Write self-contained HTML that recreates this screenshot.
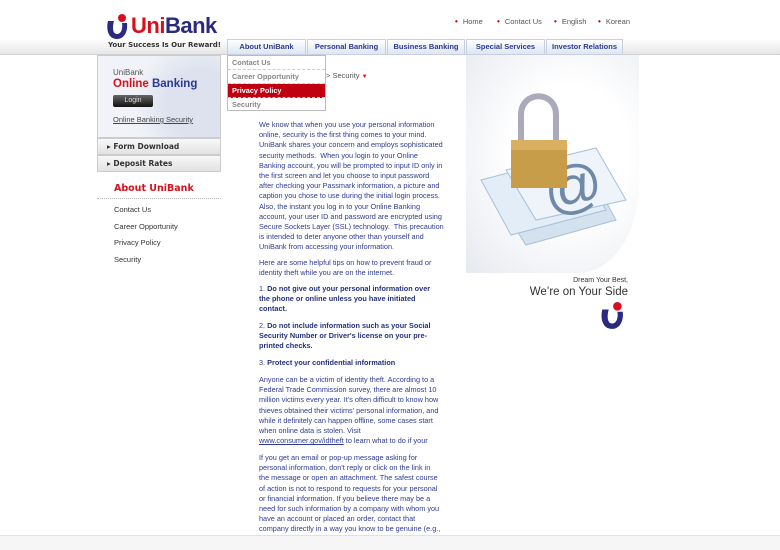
<!DOCTYPE html>
<html><head><meta charset="utf-8"><style>
*{margin:0;padding:0;box-sizing:border-box}
body{width:780px;height:550px;background:#fff;font-family:"Liberation Sans",Verdana,sans-serif;position:relative;overflow:hidden}
.a{position:absolute;white-space:nowrap}
.band{position:absolute;left:0;top:39px;width:780px;height:16px;background:linear-gradient(#fff,#e6e6e6);border-bottom:1px solid #d0d0d0}
.tab{position:absolute;top:39px;height:16px;border:1px solid #c8cfe0;background:linear-gradient(#fff,#dde6f4);font:bold 7.5px "Liberation Sans",sans-serif;color:#2a3990;text-align:center;line-height:14px}
.top{font-size:7.5px;color:#555;top:17px}
.top b{color:#c00;font-size:8px;margin-right:5px}
.menu{position:absolute;left:227px;top:55px;width:99px;height:56px;border:1px solid #bbb;background:#fff}
.menu div{height:14px;font:bold 7.3px "Liberation Sans",sans-serif;color:#888;line-height:13px;padding-left:4px;border-bottom:1px dashed #ccc}
.body{position:absolute;left:259px;font-size:7.3px;color:#2e3b92;line-height:10.2px;white-space:nowrap}
.body b{color:#26317a}
.lb{position:absolute;left:97px;width:124px;height:17px;background:linear-gradient(#f8f8f8,#e2e2e2);border:1px solid #ccc;font:bold 7.5px "DejaVu Sans",sans-serif;color:#333;line-height:15px;padding-left:9px}
.sub{position:absolute;left:114px;font-size:7.5px;color:#333}
</style></head><body>
<div class="band"></div>
<svg class="a" style="left:104px;top:13px" width="26" height="28" viewBox="0 0 26 28"><path d="M4 8 C2 16 4 26 13 26 C20 26 24 19 23 10 L18 10 C19 16 17 21 13 21 C9 21 8 15 10 8 Z" fill="#2a2a80"/><circle cx="18" cy="5" r="4" fill="#d8101c"/></svg>
<div class="a" style="left:131px;top:13px;font:bold 22px 'Liberation Sans',sans-serif;color:#d8101c;letter-spacing:-0.5px">Uni<span style="color:#2a2a80">Bank</span></div>
<div class="a" style="left:108px;top:41px;font:bold 7px 'DejaVu Sans',sans-serif;color:#333">Your Success Is Our Reward!</div>
<div class="a top" style="left:455px"><b>•</b>Home</div>
<div class="a top" style="left:497px"><b>•</b>Contact Us</div>
<div class="a top" style="left:554px"><b>•</b>English</div>
<div class="a top" style="left:598px"><b>•</b>Korean</div>
<div class="tab" style="left:227px;width:79px">About UniBank</div>
<div class="tab" style="left:307px;width:79px">Personal Banking</div>
<div class="tab" style="left:387px;width:78px">Business Banking</div>
<div class="tab" style="left:466px;width:79px">Special Services</div>
<div class="tab" style="left:546px;width:77px">Investor Relations</div>
<div class="a" style="left:466px;top:55px;width:173px;height:218px;background:radial-gradient(ellipse at 60% 45%,#fff 40%,#e6e9ef 100%);border-bottom-right-radius:60px 90px"></div>
<svg class="a" style="left:476px;top:70px" width="160" height="180" viewBox="0 0 160 180">
<path d="M45 75 L45 45 C45 20 80 20 80 45 L80 75" fill="none" stroke="#aab" stroke-width="6"/>
<polygon points="15,120 110,95 140,150 50,175" fill="#d4e2f0" stroke="#a9bfd8"/>
<polygon points="5,110 100,85 130,140 35,165" fill="#e3edf7" stroke="#a9bfd8"/>
<polygon points="30,100 120,78 150,130 60,150" fill="#eef4fa" stroke="#a9bfd8"/>
<text x="68" y="138" font-family="Liberation Sans,sans-serif" font-size="58" fill="#7089a8" transform="rotate(-12 90 120)">@</text>
<rect x="35" y="70" width="56" height="48" fill="#c79d4a"/>
<rect x="35" y="70" width="56" height="10" fill="#d8b060"/>
</svg>
<div class="a" style="left:528px;width:100px;text-align:right;top:277px;font-size:7px;color:#333">Dream Your Best,</div>
<div class="a" style="left:500px;width:128px;text-align:right;top:286px;font-size:11.5px;color:#333">We’re on Your Side</div>
<svg class="a" style="left:598px;top:300px" width="28" height="32" viewBox="0 0 26 28"><path d="M4 8 C2 16 4 26 13 26 C20 26 24 19 23 10 L18 10 C19 16 17 21 13 21 C9 21 8 15 10 8 Z" fill="#2a2a80"/><circle cx="18" cy="5" r="4" fill="#d8101c"/></svg>
<div class="a" style="left:97px;top:55px;width:124px;height:83px;background:radial-gradient(circle at 85% 60%,#dde2ee 30%,#f1f3f8 60%);border:1px solid #ccc"></div>
<div class="a" style="left:113px;top:68px;font-size:8px;color:#555">UniBank</div>
<div class="a" style="left:113px;top:78px;font:bold 11.5px 'Liberation Sans',sans-serif;color:#d8101c">Online <span style="color:#2a3990">Banking</span></div>
<div class="a" style="left:113px;top:95px;width:40px;height:12px;background:linear-gradient(#666,#111);border-radius:2px;font-size:7px;color:#ddd;text-align:center;line-height:12px">Login</div>
<div class="a" style="left:113px;top:115px;font-size:7.5px;color:#444;text-decoration:underline">Online Banking Security</div>
<div class="lb" style="top:138px">▸ Form Download</div>
<div class="lb" style="top:155px">▸ Deposit Rates</div>
<div class="a" style="left:114px;top:183px;font:bold 9.5px 'DejaVu Sans',sans-serif;color:#d8101c">About UniBank</div>
<div class="a" style="left:97px;top:198px;width:124px;border-top:1px dotted #bbb"></div>
<div class="sub a" style="top:205px">Contact Us</div>
<div class="sub a" style="top:222px">Career Opportunity</div>
<div class="sub a" style="top:238px">Privacy Policy</div>
<div class="sub a" style="top:255px">Security</div>
<div class="a" style="left:326px;top:71px;font-size:7.5px;color:#555">&gt; Security <span style="color:#d8101c;font-size:6px">▼</span></div>
<div class="menu"><div>Contact Us</div><div>Career Opportunity</div><div style="background:#c00010;color:#fff">Privacy Policy</div><div style="border:0">Security</div></div>
<div class="body" style="top:120px">We know that when you use your personal information<br>online, security is the first thing comes to your mind.<br>UniBank shares your concern and employs sophisticated<br>security methods.&nbsp; When you login to your Online<br>Banking account, you will be prompted to input ID only in<br>the first screen and let you choose to input password<br>after checking your Passmark information, a picture and<br>caption you chose to use during the initial login process.<br>Also, the instant you log in to your Online Banking<br>account, your user ID and password are encrypted using<br>Secure Sockets Layer (SSL) technology.&nbsp; This precaution<br>is intended to deter anyone other than yourself and<br>UniBank from accessing your information.</div>
<div class="body" style="top:258px">Here are some helpful tips on how to prevent fraud or<br>identity theft while you are on the internet.</div>
<div class="body" style="top:284px">1. <b>Do not give out your personal information over<br>the phone or online unless you have initiated<br>contact.</b></div>
<div class="body" style="top:321px">2. <b>Do not include information such as your Social<br>Security Number or Driver's license on your pre-<br>printed checks.</b></div>
<div class="body" style="top:358px">3. <b>Protect your confidential information</b></div>
<div class="body" style="top:375px">Anyone can be a victim of identity theft. According to a<br>Federal Trade Commission survey, there are almost 10<br>million victims every year. It's often difficult to know how<br>thieves obtained their victims' personal information, and<br>while it definitely can happen offline, some cases start<br>when online data is stolen. Visit<br><u>www.consumer.gov/idtheft</u> to learn what to do if your</div>
<div class="body" style="top:453px">If you get an email or pop-up message asking for<br>personal information, don't reply or click on the link in<br>the message or open an attachment. The safest course<br>of action is not to respond to requests for your personal<br>or financial information. If you believe there may be a<br>need for such information by a company with whom you<br>have an account or placed an order, contact that<br>company directly in a way you know to be genuine (e.g.,</div>
<div class="a" style="left:0;top:535px;width:780px;height:15px;background:#f6f6f6;border-top:1px solid #e2e2e2"></div>
</body></html>
